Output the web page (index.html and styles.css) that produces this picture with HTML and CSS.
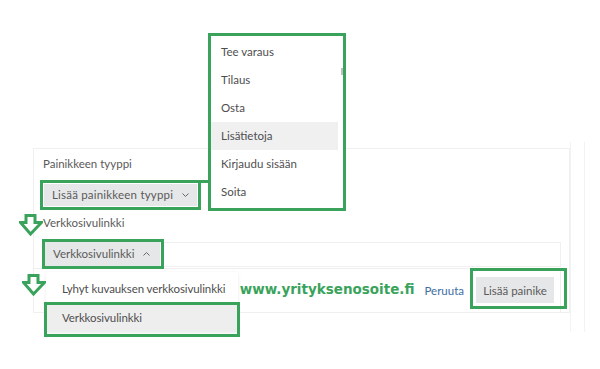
FILE: index.html
```html
<!DOCTYPE html>
<html lang="fi">
<head>
<meta charset="utf-8">
<title>Painike</title>
<link rel="stylesheet" href="styles.css">
</head>
<body>
<div class="page">
  <div class="panel">
    <div class="label first">Painikkeen tyyppi</div>
    <div class="btn btn-type">Lisää painikkeen tyyppi
      <svg class="chev" width="7" height="4" viewBox="0 0 7 4"><polyline points="0.5,0.5 3.5,3.5 6.5,0.5" fill="none" stroke="#666" stroke-width="1"/></svg>
    </div>
    <div class="label second">Verkkosivulinkki</div>
    <div class="field">
      <div class="btn btn-link">Verkkosivulinkki
        <svg class="chev" width="7" height="4" viewBox="0 0 7 4"><polyline points="0.5,3.5 3.5,0.5 6.5,3.5" fill="none" stroke="#666" stroke-width="1"/></svg>
      </div>
    </div>
    <div class="actions">
      <span class="url">www.yrityksenosoite.fi</span>
      <span class="cancel">Peruuta</span>
      <span class="btn btn-add">Lisää painike</span>
    </div>
  </div>
  <div class="track"></div>
</div>

<ul class="menu menu-types">
  <li>Tee varaus</li>
  <li>Tilaus</li>
  <li>Osta</li>
  <li class="active">Lisätietoja</li>
  <li>Kirjaudu sisään</li>
  <li>Soita</li>
  <li class="thumb"></li>
</ul>

<ul class="menu menu-links">
  <li>Lyhyt kuvauksen verkkosivulinkki</li>
  <li class="active">Verkkosivulinkki</li>
</ul>

<div class="mark mark-type"></div>
<div class="mark mark-link"></div>
<div class="mark mark-item"></div>
<div class="mark mark-add"></div>

<svg class="arrow arrow-1" width="24" height="22" viewBox="0 0 24 22"><path d="M7 1.5 H16 V8.5 H22.5 L11.5 20 L1.5 8.5 H7 Z" fill="#fff" stroke="#3aa35b" stroke-width="3" stroke-linejoin="miter"/></svg>
<svg class="arrow arrow-2" width="24" height="22" viewBox="0 0 24 22"><path d="M7 1.5 H16 V8.5 H22.5 L11.5 20 L1.5 8.5 H7 Z" fill="#fff" stroke="#3aa35b" stroke-width="3" stroke-linejoin="miter"/></svg>
</body>
</html>
```

FILE: styles.css
```css
* { box-sizing: border-box; }
html, body { margin: 0; padding: 0; background: #fff; }
body {
  width: 600px;
  height: 369px;
  overflow: hidden;
  position: relative;
  font-family: Lato, "Open Sans", sans-serif;
  font-size: 11.5px;
  color: #5a5a5a;
}
.page {
  display: flex;
  align-items: flex-start;
  padding: 148px 0 0 33px;
}
.panel {
  width: 537px;
  height: 165px;
  border: 1px solid #f0f0f0;
  padding: 0 9px 0 9px;
  display: flex;
  flex-direction: column;
  align-items: flex-start;
}
.track {
  width: 15px;
  height: 190px;
  margin: -6px 0 0 0;
  border-left: 1px solid #f3f3f3;
  border-right: 1px solid #f3f3f3;
}
.label { line-height: 16px; color: #5a5a5a; }
.label.first { margin-top: 7px; }
.label.second { margin-top: 9px; }
.btn {
  background: #e6e7e8;
  color: #5a5a5a;
  display: inline-flex;
  align-items: center;
}
.btn-type {
  margin: 12px 0 0 1px;
  height: 22px;
  width: 153px;
  padding-left: 8px;
  letter-spacing: 0.2px;
}
.chev { margin-left: 9px; }
.field {
  margin: 11px 0 0 1px;
  width: 517px;
  height: 25px;
  border: 1px solid #f0f0f0;
  border-left: none;
}
.btn-link {
  height: 24px;
  width: 116px;
  padding-left: 9px;
  margin-top: -1px;
}
.actions {
  margin: 1px 0 0 -9px;
  width: 527px;
  height: 45px;
  border-top: 1px solid #eeeeee;
  border-right: 1px solid #eeeeee;
  display: flex;
  align-items: center;
  justify-content: flex-end;
  padding-right: 6px;
}
.url {
  font-family: "DejaVu Sans", Verdana, sans-serif;
  font-weight: bold;
  font-size: 13.5px;
  color: #3aa35b;
  margin-right: 10px;
  position: relative;
  top: -1px;
}
.cancel { color: #3d6ea6; margin-right: 12px; }
.btn-add {
  height: 26px;
  width: 78px;
  justify-content: center;
}

.menu {
  list-style: none;
  margin: 0;
  padding: 0;
  position: absolute;
  background: #fff;
  color: #4e4e4e;
}
.menu-types {
  left: 208px;
  top: 33px;
  width: 138px;
  height: 178px;
  border: 3px solid #3aa35b;
  padding: 2px 0;
}
.menu-types li {
  height: 28px;
  line-height: 28px;
  padding-left: 10px;
  margin-right: 5px;
}
.menu-types li.active { background: #f0f0f1; }
.menu-types li.thumb {
  position: absolute;
  right: 0;
  top: 32px;
  width: 2px;
  height: 7px;
  padding: 0;
  margin: 0;
  background: #bdbdbd;
}
.menu-links {
  left: 46px;
  top: 272px;
  width: 192px;
  padding-top: 2px;
  box-shadow: 0 1px 4px rgba(0,0,0,0.08);
}
.menu-links li {
  height: 30px;
  line-height: 30px;
  padding-left: 16px;
  letter-spacing: -0.1px;
}
.menu-links li.active {
  height: 28px;
  line-height: 28px;
  background: #eeeeef;
}

.mark {
  position: absolute;
  border: 3px solid #3aa35b;
}
.mark-type { left: 40px; top: 180px; width: 161px; height: 30px; }
.mark-type::after {
  content: "";
  position: absolute;
  top: -3px;
  right: -10px;
  width: 10px;
  height: 3px;
  background: #3aa35b;
}
.mark-link { left: 42px; top: 239px; width: 122px; height: 30px; }
.mark-item { left: 44px; top: 302px; width: 196px; height: 35px; }
.mark-add { left: 470px; top: 268px; width: 97px; height: 41px; }

.arrow { position: absolute; }
.arrow-1 { left: 19px; top: 214px; }
.arrow-2 { left: 22px; top: 274px; }
```
